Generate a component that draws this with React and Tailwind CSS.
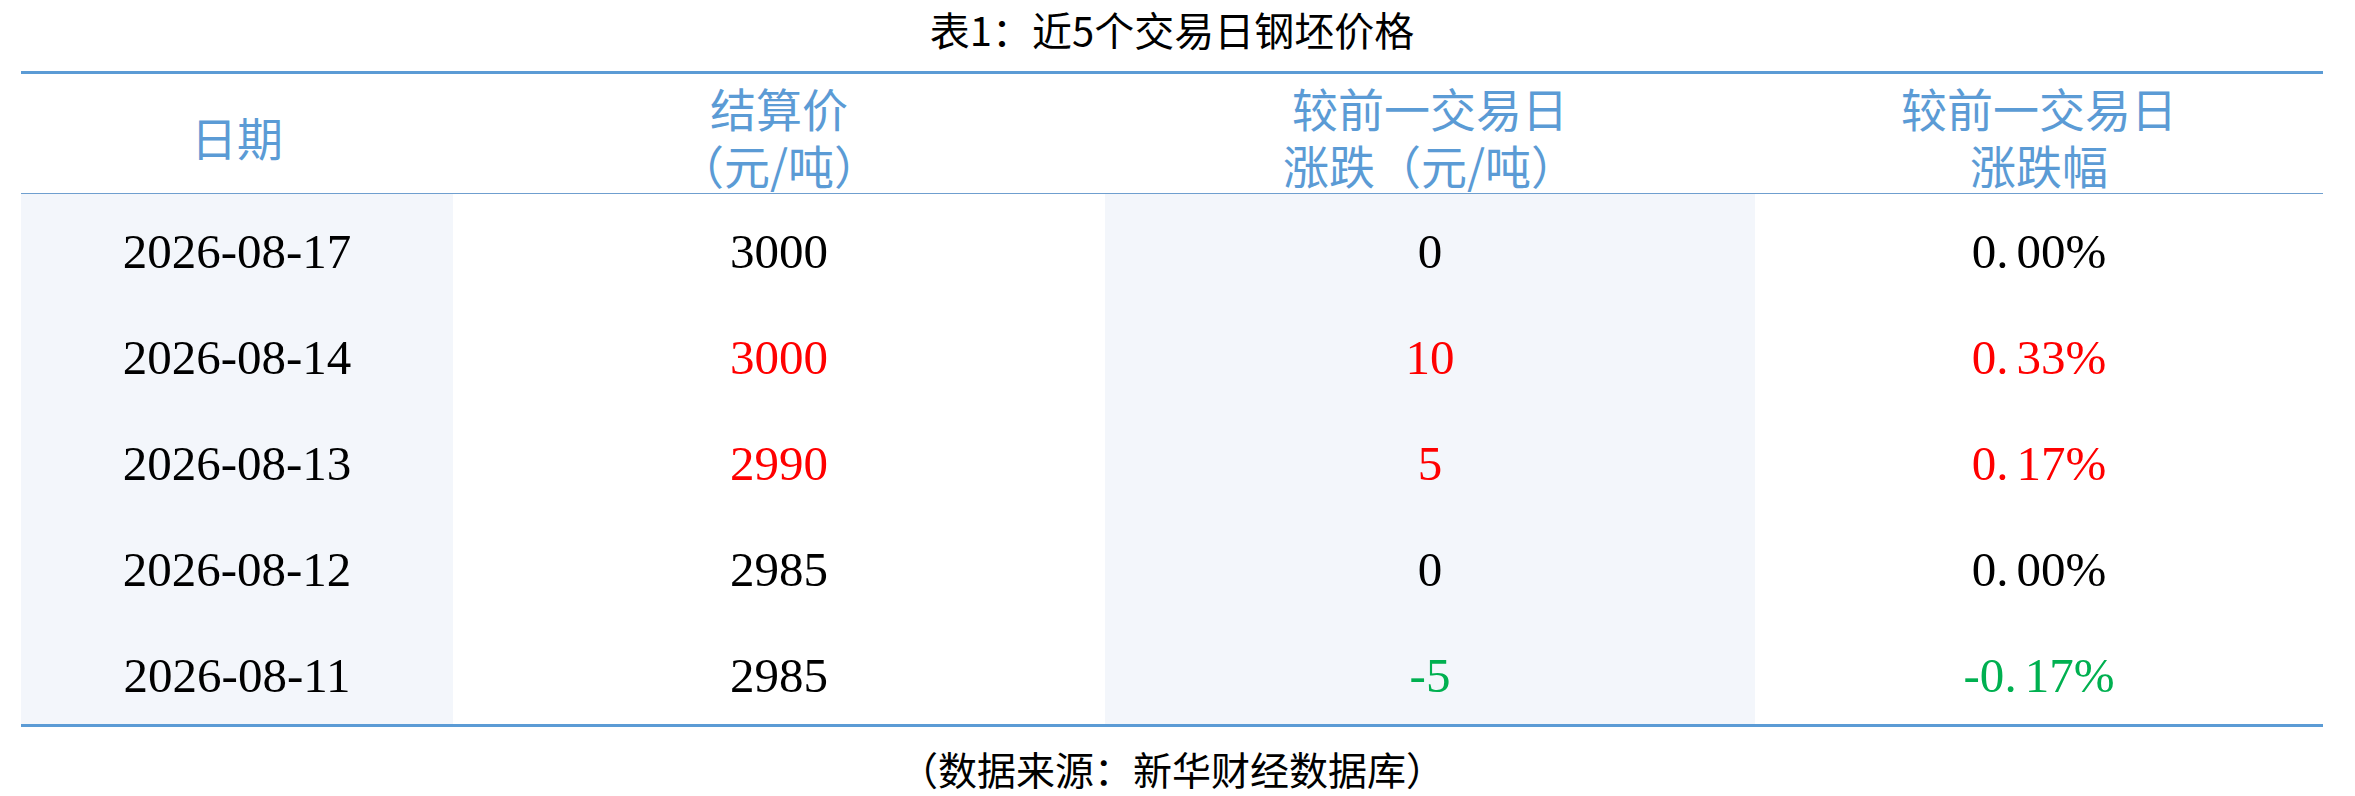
import React from "react";

const rows = [
  { date: "2026-08-17", price: "3000", pTone: "flat", diff: "0", pct: ["0", "00%"], tone: "flat" },
  { date: "2026-08-14", price: "3000", pTone: "up", diff: "10", pct: ["0", "33%"], tone: "up" },
  { date: "2026-08-13", price: "2990", pTone: "up", diff: "5", pct: ["0", "17%"], tone: "up" },
  { date: "2026-08-12", price: "2985", pTone: "flat", diff: "0", pct: ["0", "00%"], tone: "flat" },
  { date: "2026-08-11", price: "2985", pTone: "flat", diff: "-5", pct: ["-0", "17%"], tone: "down" },
];

const toneClass = {
  flat: "text-black",
  up: "text-[#ff0000]",
  down: "text-[#00b050]",
};

const cjk = { fontFamily: '"Noto Sans CJK SC", sans-serif' };
const num = { fontFamily: '"Liberation Serif", "Noto Sans CJK SC", serif' };

function HeadCell({ lines }) {
  return (
    <div className="flex flex-col items-center justify-center gap-[11px] pt-[4px] text-[46px] leading-[46px] text-[#5b9bd5]" style={cjk}>
      {lines.map((l) => (
        <span key={l}>{l}</span>
      ))}
    </div>
  );
}

function Cell({ children, shaded, className = "" }) {
  return (
    <div
      className={`flex h-[106px] items-center justify-center pt-2 text-[49px] leading-[49px] ${shaded ? "bg-[#f3f6fb]" : "bg-white"} ${className}`}
      style={num}
    >
      {children}
    </div>
  );
}

export default function App() {
  return (
    <div className="h-[796px] w-[2355px] overflow-hidden bg-white">
      <div className="w-[2302px] ml-[21px]">
        <div className="flex h-[71px] items-start justify-center pt-[8px] text-[40px] leading-[42px] text-black" style={cjk}>
          表1：近5个交易日钢坯价格
        </div>

        <div className="border-t-[3px] border-b-[3px] border-[#5b9bd5]">
          <div className="grid h-[120px] grid-cols-[432px_652px_650px_568px] border-b border-[#6f9fcf]">
            <HeadCell lines={["日期"]} />
            <HeadCell lines={["结算价", "（元/吨）"]} />
            <HeadCell lines={["较前一交易日", "涨跌（元/吨）"]} />
            <HeadCell lines={["较前一交易日", "涨跌幅"]} />
          </div>

          {rows.map((r) => (
            <div key={r.date} className="grid grid-cols-[432px_652px_650px_568px]">
              <Cell shaded className="text-black">{r.date}</Cell>
              <Cell className={toneClass[r.pTone]}>{r.price}</Cell>
              <Cell shaded className={toneClass[r.tone]}>{r.diff}</Cell>
              <Cell className={toneClass[r.tone]}>
                {r.pct[0]}
                <span className="mr-[8px]">.</span>
                {r.pct[1]}
              </Cell>
            </div>
          ))}
        </div>

        <div className="flex h-[69px] items-start justify-center pt-[21px] text-[39px] leading-[40px] text-black" style={cjk}>
          （数据来源：新华财经数据库）
        </div>
      </div>
    </div>
  );
}
